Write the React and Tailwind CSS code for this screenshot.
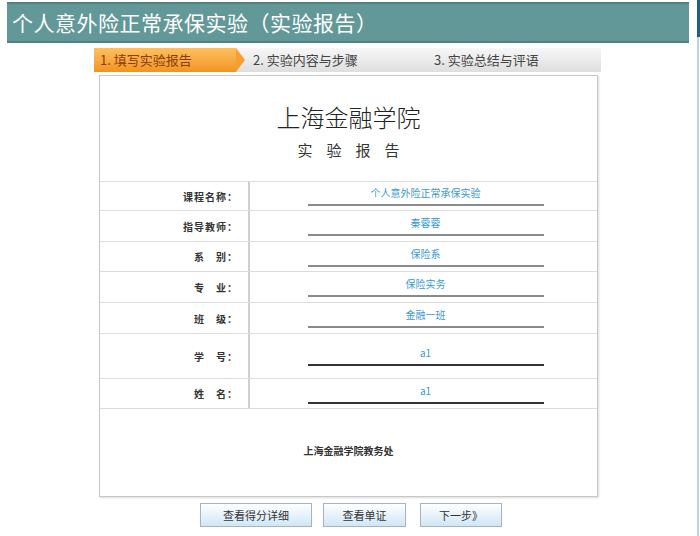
import React from "react";

const font = { fontFamily: '"Noto Sans CJK SC", "Noto Sans", sans-serif' };

const rows = [
  { label: "课程名称：", value: "个人意外险正常承保实验", h: "h-[29px]" },
  { label: "指导教师：", value: "秦蓉蓉", h: "h-[31px]" },
  { label: "系　别：", value: "保险系", h: "h-[30px]" },
  { label: "专　业：", value: "保险实务", h: "h-[31px]" },
  { label: "班　级：", value: "金融一班", h: "h-[31px]" },
  { label: "学　号：", value: "a1", h: "h-[45px]", dark: true },
  { label: "姓　名：", value: "a1", h: "h-[30px]", dark: true },
];

function Row({ label, value, h, dark }) {
  return (
    <div className={`flex ${h} border-t border-[#dcdcdc]`}>
      <div className="flex w-[150px] items-center justify-end border-r-2 border-[#cfcfcf] pr-[10px] text-[10px] font-bold tracking-[1px] text-[#333]">
        {label}
      </div>
      <div className="flex flex-1 flex-col items-center justify-center pl-[4px]">
        <div className="text-[10px] leading-[14px] text-[#3a9bd0]">{value}</div>
        <div className={`mt-[4px] h-[2px] w-[236px] ${dark ? "bg-[#333]" : "bg-[#8a8a8a]"}`} />
      </div>
    </div>
  );
}

export default function App() {
  return (
    <div className="flex h-[536px] w-[700px] bg-white" style={font}>
      <div className="flex w-[697px] flex-col">
        {/* title bar */}
        <div className="ml-[7px] mt-[2px] flex h-[41px] w-[682px] items-center border-t-2 border-b-2 border-[#4f8484] bg-[#629898] pl-[5px]">
          <span className="text-[21px] leading-none tracking-[0.5px] text-white">
            个人意外险正常承保实验（实验报告）
          </span>
        </div>

        {/* steps */}
        <div className="ml-[94px] mt-[5px] flex h-[24px] w-[507px] bg-gradient-to-b from-[#f7f7f7] to-[#dedede] text-[13px] text-[#444]">
          <div className="relative flex w-[142px] items-center bg-gradient-to-b from-[#fdc060] to-[#f39419] pl-[6px] text-[#8a3b0a]">
            1. 填写实验报告
            <div className="absolute right-[-9px] top-0 h-0 w-0 border-y-[12px] border-l-[9px] border-y-transparent border-l-[#f7a030]" />
          </div>
          <div className="flex w-[187px] items-center pl-[17px]">2. 实验内容与步骤</div>
          <div className="flex items-center pl-[11px]">3. 实验总结与评语</div>
        </div>

        {/* report */}
        <div className="ml-[99px] mt-[3px] flex h-[422px] w-[499px] flex-col border border-[#c8c8c8] shadow-[1px_1px_2px_rgba(0,0,0,0.15)]">
          <div className="flex h-[105px] flex-col items-center pt-[26px]">
            <div className="text-[24px] font-light leading-[30px] text-[#222]">上海金融学院</div>
            <div className="mt-[8px] pl-[14px] text-[15px] leading-[20px] tracking-[14px] text-[#333]">实验报告</div>
          </div>
          {rows.map((r) => (
            <Row key={r.label} {...r} />
          ))}
          <div className="flex flex-1 items-center justify-center border-t border-[#dcdcdc] pb-[4px] text-[10px] font-bold text-[#333]">
            上海金融学院教务处
          </div>
        </div>

        {/* buttons */}
        <div className="ml-[200px] mt-[6px] flex gap-[11px] text-[11px] text-[#333]">
          <button className="h-[24px] w-[112px] border border-[#a8b4bc] bg-gradient-to-b from-white to-[#cfe6f6]">查看得分详细</button>
          <button className="h-[24px] w-[83px] border border-[#a8b4bc] bg-gradient-to-b from-white to-[#cfe6f6]">查看单证</button>
          <button className="ml-[3px] h-[24px] w-[82px] border border-[#a8b4bc] bg-gradient-to-b from-white to-[#cfe6f6]">下一步》</button>
        </div>
      </div>

      {/* right edge */}
      <div className="flex w-[3px] flex-col">
        <div className="h-[37px] bg-[#1f5f86]" />
        <div className="flex-1 border-l-2 border-[#b7d3e4]" />
      </div>
    </div>
  );
}
